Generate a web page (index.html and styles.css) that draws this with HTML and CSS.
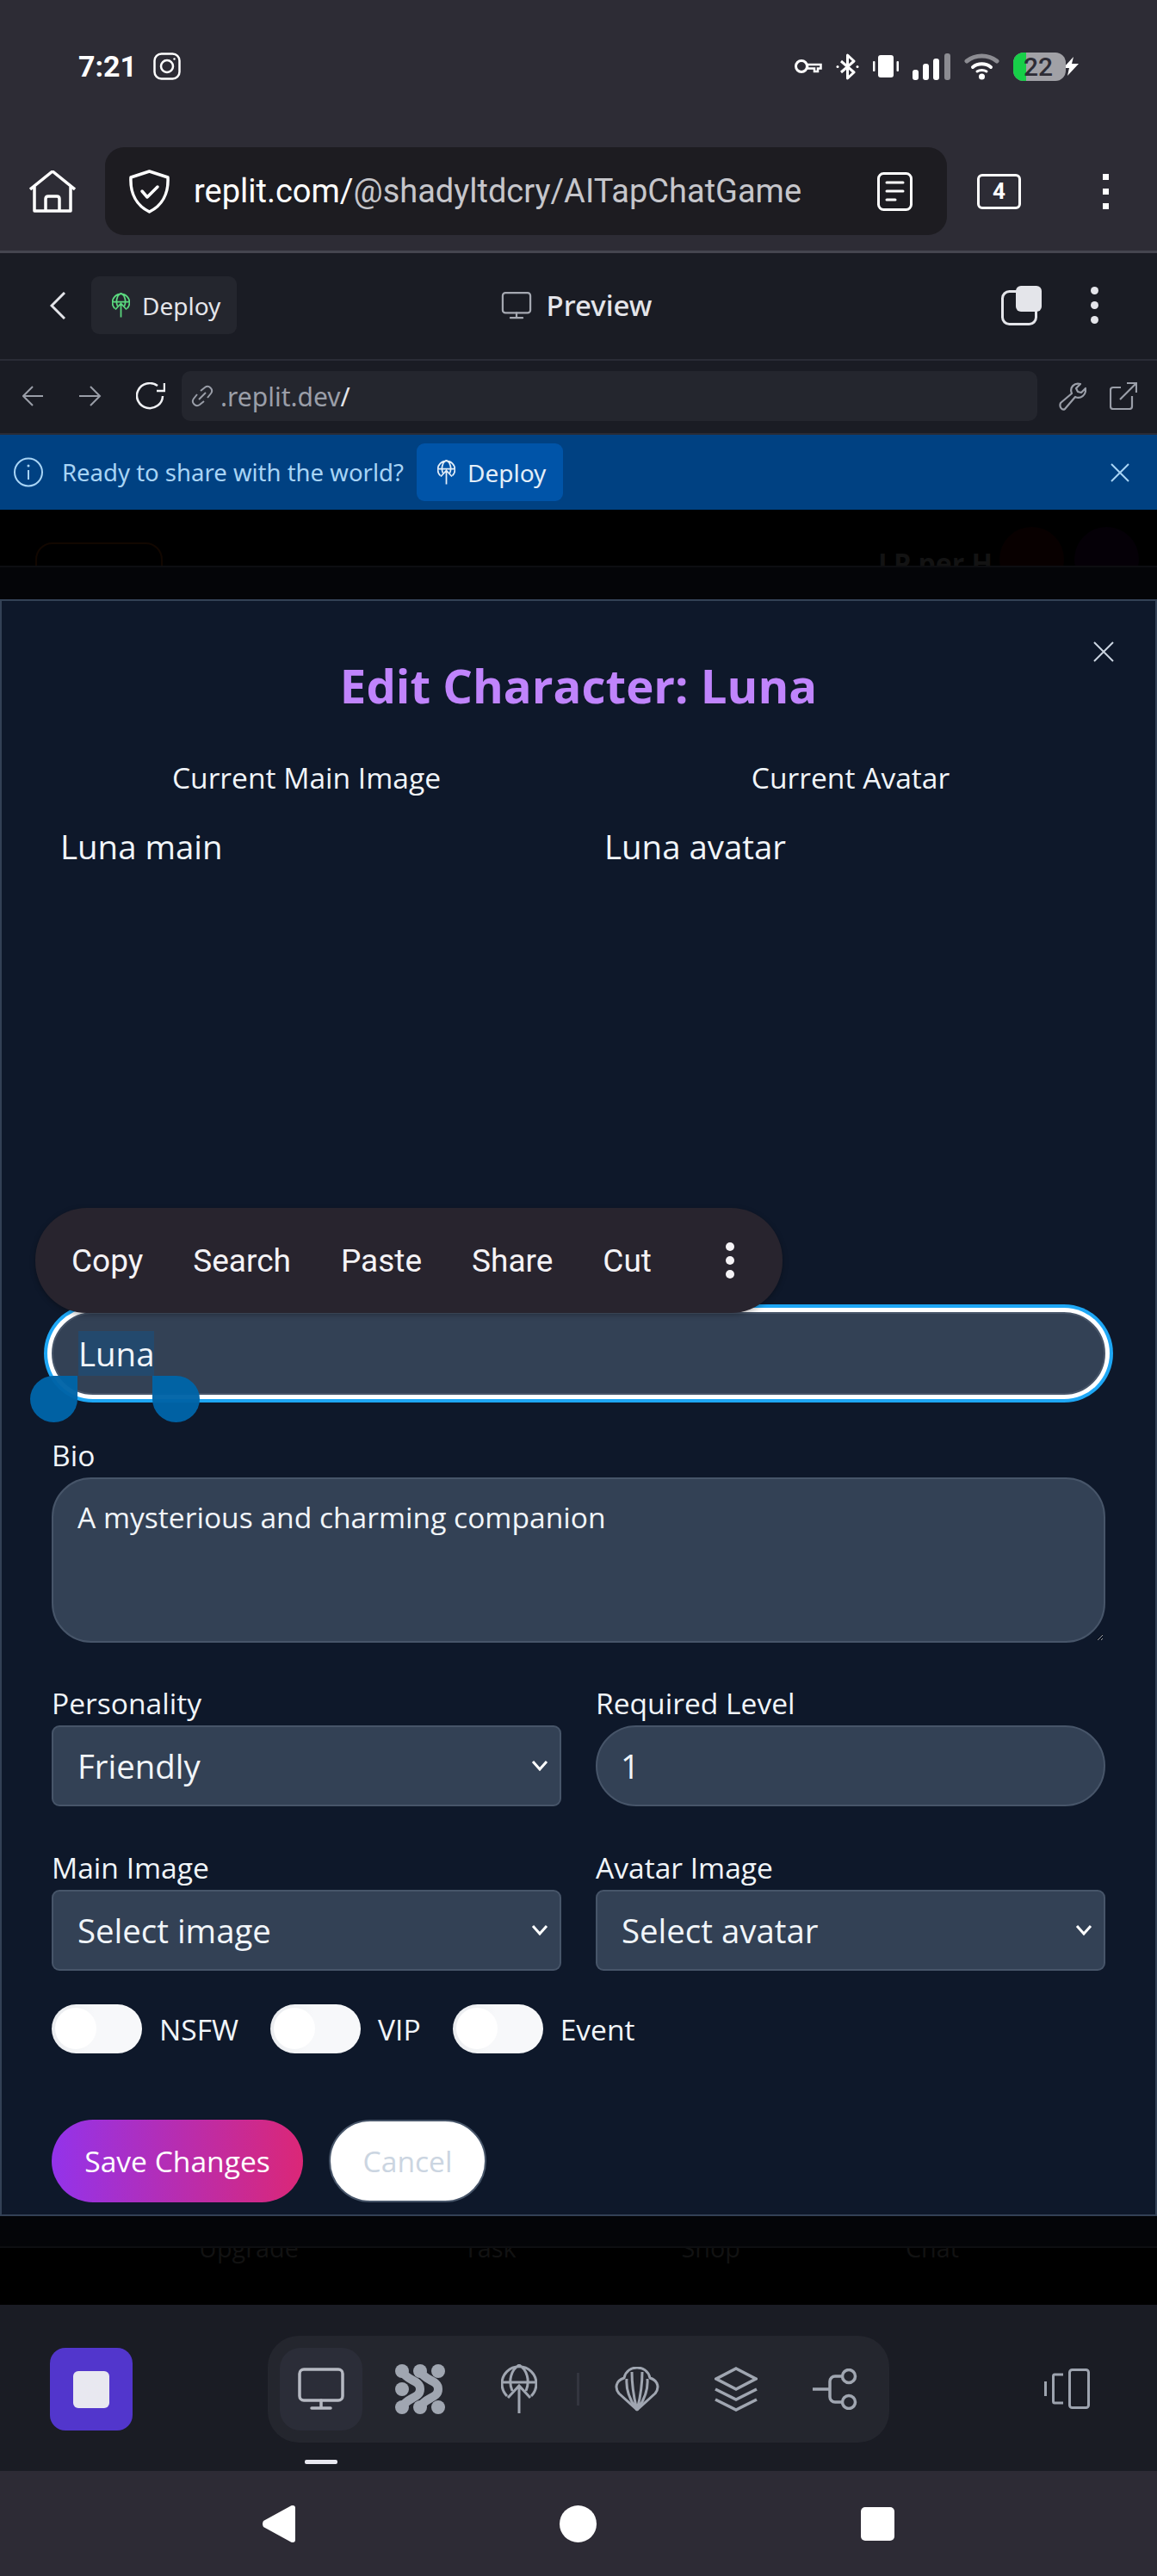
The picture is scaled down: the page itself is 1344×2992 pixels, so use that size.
FILE: index.html

```html
<!DOCTYPE html>
<html>
	<head>
		<meta charset="utf-8">
		<title>Edit Character: Luna</title>
		<link rel="stylesheet" href="styles.css">
	</head>

	<body>
		<svg class="defs" width="0" height="0">
			<symbol id="i-deploy" viewBox="0 0 42 58">
				<path d="M7 37A20 20 0 1 1 35 37M13 31C8 19 12 6 21 1C30 6 34 19 29 31M1 21H41M21 57V26M8 39L21 25L34 39" fill="none" stroke="currentColor"/>
			</symbol>
			<symbol id="i-monitor" viewBox="0 0 56 56">
				<rect x="3" y="5" width="50" height="36" rx="5" fill="none" stroke="currentColor"/>
				<path d="M28 41V50M17 50H39" fill="none" stroke="currentColor" stroke-linecap="round"/>
			</symbol>
		</svg>

		<header class="chrome">
			<div class="status-row">
				<span class="time">7:21</span>
				<svg class="ig" width="32" height="32" viewBox="0 0 32 32" fill="none" stroke="#fff" stroke-width="2.5"><rect x="1.5" y="1.5" width="29" height="29" rx="8"/><circle cx="16" cy="16" r="7"/><circle cx="24.5" cy="7.5" r="1.2" fill="#fff" stroke="none"/></svg>
				<div class="status-icons">
					<svg width="33" height="20" viewBox="0 0 33 20" fill="none" stroke="#fff" stroke-width="3"><circle cx="9" cy="10" r="6.5"/><path d="M16 8H31.500V12.500H28V16H24V12.500H16Z" stroke-width="2.500"/></svg>
					<svg width="27" height="31" viewBox="0 0 27 31" fill="none" stroke="#fff" stroke-width="3" stroke-linejoin="round"><path d="M6 9L21 22L13.500 29V2L21 9L6 22"/><circle cx="2" cy="15.500" r="1.500" fill="#fff" stroke="none"/><circle cx="25" cy="15.500" r="1.500" fill="#fff" stroke="none"/></svg>
					<svg width="30" height="26" viewBox="0 0 30 26" fill="#fff"><rect x="6" width="18" height="26" rx="3"/><rect y="7" width="2.500" height="12" rx="1"/><rect x="27.500" y="7" width="2.500" height="12" rx="1"/></svg>
					<svg width="44" height="31" viewBox="0 0 44 31" fill="#fff"><rect y="19" width="7" height="12" rx="3"/><rect x="12" y="12" width="7" height="19" rx="3"/><rect x="24" y="6" width="7" height="25" rx="3"/><rect x="37" width="7" height="31" rx="3" fill="#8c8c92"/></svg>
					<svg width="41" height="31" viewBox="0 0 41 31" fill="none" stroke-linecap="round"><path d="M3 9C13 1 28 1 38 9" stroke="#8c8c92" stroke-width="5"/><path d="M10 16C16 11 25 11 31 16" stroke="#fff" stroke-width="4"/><path d="M15 21C18 19 23 19 26 21" stroke="#fff" stroke-width="3"/><circle cx="20.500" cy="27" r="3.500" fill="#fff"/></svg>
					<div class="battery"><span class="battery-fill"></span><span class="battery-num">22</span></div>
					<svg class="bolt" width="20" height="24" viewBox="0 0 20 24" fill="#fff" stroke="#2d2c35" stroke-width="2" paint-order="stroke"><path d="M13 1L1 14H8L6 23L19 9H11Z"/></svg>
				</div>
			</div>
			<div class="url-row">
				<svg class="home" width="54" height="49" viewBox="0 0 54 49" fill="none" stroke="#fff" stroke-width="3.500" stroke-linejoin="round"><path d="M1 22L27 1L53 22M6 19V47H48V19"/><path d="M19 47V33Q19 30 22 30H32Q35 30 35 33V47"/></svg>
				<div class="url-bar">
					<svg width="47" height="51" viewBox="0 0 47 51" fill="none" stroke="#fff" stroke-width="3.500" stroke-linejoin="round" stroke-linecap="round"><path d="M23.500 2L45 9C46 28 38 42 23.500 49C9 42 1 28 2 9Z"/><path d="M15 25L21 32L33 20"/></svg>
					<span class="url-text">replit.com/<span class="url-dim">@shadyltdcry/AITapChatGame</span></span>
					<svg class="reader" width="41" height="45" viewBox="0 0 41 45" fill="none" stroke="#fff" stroke-width="3" stroke-linecap="round"><rect x="1.500" y="1.500" width="38" height="42" rx="6"/><path d="M11 12H30M11 22H30M11 32H21"/></svg>
				</div>
				<div class="tab-count">4</div>
				<div class="dots-square"><i></i><i></i><i></i></div>
			</div>
		</header>

		<div class="repl-head">
			<div class="repl-left">
				<svg width="18" height="32" viewBox="0 0 18 32" fill="none" stroke="#e4e5ea" stroke-width="3"><path d="M17 1L2 16L17 31"/></svg>
				<div class="deploy-chip"><svg class="deploy-green" width="21" height="29"><use href="#i-deploy"/></svg>Deploy</div>
			</div>
			<div class="repl-title"><svg class="preview-icon" width="36" height="36"><use href="#i-monitor"/></svg>Preview</div>
			<div class="repl-right">
				<div class="split-icon"><svg width="47" height="46" viewBox="0 0 47 46"><rect x="1.500" y="6.500" width="39" height="38" rx="8" fill="none" stroke="#e4e5ea" stroke-width="3"/><rect x="17" y="0" width="30" height="30" rx="6" fill="#e4e5ea"/></svg></div>
				<div class="dots-round"><i></i><i></i><i></i></div>
			</div>
		</div>

		<div class="repl-nav">
			<svg width="24" height="24" viewBox="0 0 24 24" fill="none" stroke="#9a9ea8" stroke-width="2"><path d="M24 12H2M12 1L1 12L12 23"/></svg>
			<svg width="26" height="24" viewBox="0 0 26 24" fill="none" stroke="#9a9ea8" stroke-width="2"><path d="M0 12H24M13 1L24 12L13 23"/></svg>
			<svg width="34" height="32" viewBox="0 0 34 32" fill="none" stroke="#f0f1f4" stroke-width="2.500"><path d="M31 16A15 14.500 0 1 1 25 4M33 1V10H24"/></svg>
			<div class="repl-url">
				<svg width="26" height="26" viewBox="0 0 26 26" fill="none" stroke="#9a9ea8" stroke-width="2"><path d="M11 7L16 3A5 5 0 0 1 23 10L19 15M15 19L10 23A5 5 0 0 1 3 16L7 11M9 17L17 9"/></svg>
				<span>.replit.dev<b>/</b></span>
			</div>
			<svg width="34" height="33" viewBox="0 0 34 33" fill="none" stroke="#9a9ea8" stroke-width="2.200"><path d="M4 24L17 13C14 6 20 0 27 2L22 7L24 11L28 12L33 7C34 15 27 20 21 17L9 31C6 33 2 29 4 24Z" stroke-linejoin="round"/></svg>
			<svg width="32" height="32" viewBox="0 0 32 32" fill="none" stroke="#9a9ea8" stroke-width="2.200"><path d="M13 6H4Q1 6 1 9V28Q1 31 4 31H23Q26 31 26 28V16M12 20L31 1M20 1H31V12"/></svg>
		</div>

		<div class="banner">
			<svg width="34" height="35" viewBox="0 0 34 35" fill="none" stroke="#a8d4f5" stroke-width="2"><circle cx="17" cy="17.500" r="16"/><path d="M17 15V26" /><circle cx="17" cy="10" r="1.500" fill="#a8d4f5" stroke="none"/></svg>
			<span class="banner-text">Ready to share with the world?</span>
			<div class="banner-btn"><svg width="21" height="29"><use href="#i-deploy"/></svg>Deploy</div>
			<svg class="banner-x" width="22" height="22" viewBox="0 0 22 22" fill="none" stroke="#a8d4f5" stroke-width="2"><path d="M1 1L21 21M21 1L1 21"/></svg>
		</div>

		<div class="behind-top">
			<span class="ghost-box"></span>
			<span class="ghost-lp">LP per H</span>
			<span class="ghost-dot red"></span>
			<span class="ghost-dot violet"></span>
		</div>
		<div class="scrim-top"></div>

		<main class="modal">
			<svg class="modal-x" width="24" height="24" viewBox="0 0 24 24" fill="none" stroke="#cbd5e1" stroke-width="2"><path d="M1 1L23 23M23 1L1 23"/></svg>
			<h1>Edit Character: Luna</h1>

			<div class="previews">
				<div>
					<div class="preview-label">Current Main Image</div>
					<div class="preview-img">Luna main</div>
				</div>
				<div>
					<div class="preview-label">Current Avatar</div>
					<div class="preview-img">Luna avatar</div>
				</div>
			</div>

			<div class="name-wrap">
				<div class="menu">
					<span>Copy</span><span>Search</span><span>Paste</span><span>Share</span><span>Cut</span>
					<div class="menu-dots"><i></i><i></i><i></i></div>
				</div>
				<div class="name-field"><span class="selected">Luna</span></div>
				<i class="handle left"></i>
				<i class="handle right"></i>
			</div>

			<label class="lbl">Bio</label>
			<textarea class="bio">A mysterious and charming companion</textarea>

			<div class="two-col">
				<div>
					<label class="lbl">Personality</label>
					<select class="pick"><option>Friendly</option></select>
				</div>
				<div>
					<label class="lbl">Required Level</label>
					<input class="level" value="1">
				</div>
				<div>
					<label class="lbl">Main Image</label>
					<select class="pick"><option>Select image</option></select>
				</div>
				<div>
					<label class="lbl">Avatar Image</label>
					<select class="pick"><option>Select avatar</option></select>
				</div>
			</div>

			<div class="toggles">
				<div class="toggle"><span class="knob"></span></div><span>NSFW</span>
				<div class="toggle"><span class="knob"></span></div><span>VIP</span>
				<div class="toggle"><span class="knob"></span></div><span>Event</span>
			</div>

			<div class="actions">
				<button class="save" type="button">Save Changes</button>
				<button class="cancel" type="button">Cancel</button>
			</div>
		</main>

		<div class="scrim-bottom"></div>
		<div class="behind-bottom">
			<span>Upgrade</span><span>Task</span><span>Shop</span><span>Chat</span>
		</div>

		<div class="dock">
			<div class="stop"><span></span></div>
			<div class="tools-col">
				<div class="tools">
					<div class="tool active"><svg width="56" height="56"><use href="#i-monitor"/></svg></div>
					<div class="tool">
						<svg width="58" height="58" viewBox="0 0 58 58" fill="none" stroke="#a0a6b1" stroke-width="10" stroke-linecap="round"><path d="M8 8C14 20 29 18 29 29C29 40 14 38 8 50M29 8C35 20 50 18 50 29C50 40 35 38 29 50"/><circle cx="50" cy="8" r="8" fill="#a0a6b1" stroke="none"/><circle cx="50" cy="50" r="8" fill="#a0a6b1" stroke="none"/><circle cx="8" cy="29" r="8" fill="#a0a6b1" stroke="none"/><circle cx="8" cy="8" r="8" fill="#a0a6b1" stroke="none"/><circle cx="29" cy="8" r="8" fill="#a0a6b1" stroke="none"/><circle cx="8" cy="50" r="8" fill="#a0a6b1" stroke="none"/><circle cx="29" cy="50" r="8" fill="#a0a6b1" stroke="none"/></svg>
					</div>
					<div class="tool"><svg width="42" height="58"><use href="#i-deploy"/></svg></div>
					<span class="tool-sep"></span>
					<div class="tool">
						<svg width="52" height="52" viewBox="0 0 52 52" fill="none" stroke="currentColor" stroke-width="3" stroke-linejoin="round"><path d="M26 50L5 31C0 25 1 16 11 13C13 4 20 1 26 1C32 1 39 4 41 13C51 16 52 25 47 31Z"/><path d="M26 50C17 38 13 26 14 14M26 50C35 38 39 26 38 14M26 50C22 35 20 20 20 6M26 50C30 35 32 20 32 6"/></svg>
					</div>
					<div class="tool">
						<svg width="50" height="52" viewBox="0 0 50 52" fill="none" stroke="currentColor" stroke-width="3.500"><path d="M25 2L48 14L25 26L2 14Z"/><path d="M1 26L25 38L49 26M1 38L25 50L49 38"/></svg>
					</div>
					<div class="tool">
						<svg width="52" height="48" viewBox="0 0 52 48" fill="none" stroke="currentColor" stroke-width="3.500"><path d="M0 24H20M34 9H26A6 6 0 0 0 20 15V33A6 6 0 0 0 26 39H34"/><circle cx="42" cy="9" r="7.500"/><circle cx="42" cy="39" r="7.500"/></svg>
					</div>
				</div>
				<span class="tool-mark"></span>
			</div>
			<svg class="panel-icon" width="53" height="47" viewBox="0 0 53 47" fill="none" stroke="#9da3ae" stroke-width="3"><rect x="29.500" y="1.500" width="22" height="44" rx="3"/><path d="M22 7H12Q10.500 7 10.500 9V38Q10.500 40 12 40H22M1.500 15V32"/></svg>
		</div>

		<footer class="nav">
			<svg width="39" height="43" viewBox="0 0 39 43" fill="#fff"><path d="M36 0Q39 0 39 3V40Q39 43 36 43Q34 43 33 42L2 25Q0 21.500 2 18L33 1Q34 0 36 0Z"/></svg>
			<span class="nav-home"></span>
			<span class="nav-square"></span>
		</footer>
	</body>
</html>
```

FILE: styles.css

```css
* {
	box-sizing: border-box;
}

html, body {
	margin: 0;
	background-color: #000;
}

body {
	width: 1344px;
	height: 2992px;
	overflow: hidden;
	font-family: "Open Sans", sans-serif;
	color: #f1f5f9;
}

svg {
	flex: none;
	display: block;
}

.defs {
	position: absolute;
}

/* phone and browser chrome */
.chrome {
	height: 294px;
	padding-top: 60px;
	background-color: #2d2c35;
	border-bottom: 3px solid #45454f;
	font-family: Roboto, sans-serif;
	color: #fff;
}

.status-row {
	display: flex;
	align-items: center;
	height: 34px;
	padding: 0 90px 0 91px;
}

.time {
	font-size: 34px;
	font-weight: 700;
	width: 63px;
}

.ig {
	margin-left: 24px;
}

.status-icons {
	display: flex;
	align-items: center;
	margin-left: auto;
	gap: 16px;
}

.battery {
	display: flex;
	position: relative;
	width: 61px;
	height: 33px;
	border-radius: 12px;
	background-color: #a1a1a6;
	overflow: hidden;
}

.battery-fill {
	width: 15px;
	background-color: #17cf48;
}

.battery-num {
	position: absolute;
	left: 12px;
	top: 0;
	font-size: 30px;
	font-weight: 500;
	line-height: 33px;
	color: #2d2c35;
}

.bolt {
	margin-left: -20px;
}

.url-row {
	display: flex;
	align-items: center;
	height: 102px;
	margin-top: 77px;
	padding-left: 34px;
}

.home {
	width: 54px;
}

.url-bar {
	display: flex;
	align-items: center;
	width: 978px;
	height: 102px;
	margin-left: 34px;
	padding: 0 40px 0 28px;
	border-radius: 22px;
	background-color: #1d1c21;
}

.url-text {
	margin-left: 28px;
	font-size: 38px;
	white-space: nowrap;
}

.url-dim {
	color: #c6c6cb;
}

.reader {
	margin-left: auto;
}

.tab-count {
	width: 51px;
	height: 41px;
	margin-left: 35px;
	border: 3.5px solid #fff;
	border-radius: 6px;
	text-align: center;
	font-size: 26px;
	font-weight: 700;
	line-height: 34px;
}

.dots-square {
	display: flex;
	flex-direction: column;
	gap: 10px;
	margin-left: 95px;
}

.dots-square i {
	width: 7px;
	height: 7px;
	background-color: #fff;
}

/* replit header */
.repl-head {
	display: grid;
	grid-template-columns: 1fr auto 1fr;
	align-items: center;
	height: 125px;
	padding: 0 68px 2px 58px;
	background-color: #1a1c24;
	border-bottom: 2px solid #2a2c36;
	font-family: "Noto Sans", sans-serif;
	color: #e4e5ea;
}

.repl-left {
	display: flex;
	align-items: center;
	gap: 30px;
}

.deploy-chip, .banner-btn {
	display: flex;
	align-items: center;
	gap: 14px;
	width: 169px;
	height: 67px;
	padding-left: 24px;
	border-radius: 9px;
	background-color: #24262e;
	font-size: 28px;
	stroke-width: 3.5;
}

.deploy-green {
	color: #5bd97f;
}

.repl-title {
	display: flex;
	align-items: center;
	gap: 17px;
	margin-left: 5px;
	font-size: 33px;
	font-weight: 500;
	stroke-width: 3.5;
}

.preview-icon {
	color: #a5a8b1;
}

.repl-right {
	display: flex;
	align-items: center;
	justify-content: flex-end;
	gap: 57px;
}

.dots-round {
	display: flex;
	flex-direction: column;
	gap: 8px;
}

.dots-round i, .menu-dots i {
	display: block;
	width: 9px;
	height: 9px;
	border-radius: 50%;
	background-color: #e4e5ea;
}

.repl-nav {
	display: flex;
	align-items: center;
	height: 86px;
	padding: 0 23px 2px 26px;
	background-color: #1a1c24;
	border-bottom: 2px solid #2a2c36;
}

.repl-nav > svg:nth-child(2) {
	margin-left: 42px;
}

.repl-nav > svg:nth-child(3) {
	margin-left: 40px;
}

.repl-nav > svg:nth-child(5) {
	margin-left: 23px;
}

.repl-nav > svg:nth-child(6) {
	margin-left: 27px;
}

.repl-url {
	display: flex;
	align-items: center;
	gap: 8px;
	width: 994px;
	height: 58px;
	margin-left: 19px;
	padding-left: 11px;
	border-radius: 10px;
	background-color: #24262e;
	font-family: "Noto Sans", sans-serif;
	font-size: 30px;
	color: #9a9ea8;
}

.repl-url b {
	font-weight: 400;
	color: #e4e5ea;
}

.banner {
	display: flex;
	align-items: center;
	height: 87px;
	padding: 0 32px 0 16px;
	background-color: #004182;
	font-family: "Noto Sans", sans-serif;
	color: #a8d4f5;
}

.banner-text {
	width: 398px;
	margin-left: 22px;
	font-size: 27.5px;
	white-space: nowrap;
}

.banner-btn {
	width: 170px;
	margin-left: 14px;
	background-color: #0054a8;
	color: #e3eef8;
}

.banner-x {
	margin-left: auto;
}

/* faded page behind the modal */
.behind-top {
	display: flex;
	align-items: flex-start;
	height: 65px;
	padding-left: 41px;
	overflow: hidden;
}

.ghost-box {
	width: 148px;
	height: 80px;
	margin-top: 38px;
	border: 2px solid #120700;
	border-radius: 20px;
}

.ghost-lp {
	margin: 40px 8px 0 831px;
	font-size: 32px;
	font-weight: 700;
	white-space: nowrap;
	color: #131313;
}

.ghost-dot {
	flex: none;
	width: 75px;
	height: 75px;
	margin-top: 20px;
	border-radius: 50%;
}

.ghost-dot.red {
	background-color: #080000;
}

.ghost-dot.violet {
	margin-left: 12px;
	background-color: #050007;
}

.scrim-top {
	height: 39px;
	background-color: #040508;
	border-top: 2px solid #0d0e11;
}

.scrim-bottom {
	height: 37px;
	background-color: #040508;
	border-bottom: 2px solid #0d0e11;
}

.behind-bottom {
	display: flex;
	gap: 192px;
	height: 66px;
	padding-left: 231px;
	overflow: hidden;
	font-size: 28.8px;
	line-height: 40px;
	color: #121212;
}

.behind-bottom span {
	margin-top: -20px;
}

/* modal */
.modal {
	position: relative;
	height: 1878px;
	padding: 60px 58px 0;
	background-color: #0e182a;
	border: 2px solid #334155;
}

.modal-x {
	position: absolute;
	top: 47px;
	right: 48px;
}

h1 {
	margin: 0;
	text-align: center;
	font-size: 54.5px;
	font-weight: 700;
	line-height: 76px;
	color: #c084fc;
}

.previews {
	display: grid;
	grid-template-columns: 592px 592px;
	gap: 40px;
	margin-top: 47px;
}

.preview-label {
	text-align: center;
	font-size: 33.6px;
	line-height: 44px;
}

.preview-img {
	height: 599px;
	padding: 33px 10px 0 10px;
	font-size: 38.4px;
	line-height: 50px;
}

.name-wrap {
	position: relative;
}

.menu {
	position: absolute;
	z-index: 2;
	left: -19px;
	top: -121px;
	display: flex;
	align-items: center;
	width: 868px;
	height: 122px;
	padding-left: 42px;
	border-radius: 60px;
	background-color: #28242e;
	box-shadow: 0 2px 6px rgba(0, 0, 0, .3);
	font-family: Roboto, sans-serif;
	font-size: 37px;
	color: #f5f3f6;
}

.menu span {
	margin-right: 58px;
}

.menu-dots {
	display: flex;
	flex-direction: column;
	gap: 6px;
	margin-left: 28px;
}

.menu-dots i {
	width: 10px;
	height: 10px;
	background-color: #f5f3f6;
}

.name-field {
	display: flex;
	align-items: center;
	height: 96px;
	padding-left: 29px;
	background-color: #334155;
	border: 2px solid #475569;
	border-radius: 48px;
	box-shadow: 0 0 0 5px #fff, 0 0 0 9px #1ea7f5;
	font-size: 38.4px;
}

.selected {
	line-height: 52px;
	background-color: #23496d;
}

.handle {
	position: absolute;
	top: 74px;
	width: 55px;
	height: 54px;
	background-color: rgba(0, 100, 167, .97);
}

.handle.left {
	left: -25px;
	border-radius: 50% 0 50% 50%;
}

.handle.right {
	left: 117px;
	border-radius: 0 50% 50% 50%;
}

.lbl {
	display: block;
	margin-bottom: 4px;
	font-size: 33.6px;
	line-height: 44px;
}

.name-wrap + .lbl {
	margin-top: 48px;
}

.bio, .pick, .level {
	display: block;
	width: 100%;
	color: #f1f5f9;
	background-color: #334155;
	border: 2px solid #475569;
	font-family: "Open Sans", sans-serif;
	outline: none;
}

.bio {
	height: 192px;
	padding: 22px 28px;
	border-radius: 46px;
	font-size: 33.6px;
	line-height: 44px;
}

.two-col {
	display: grid;
	grid-template-columns: 592px 592px;
	gap: 49px 40px;
	margin-top: 48px;
}

.pick {
	height: 94px;
	padding-left: 28px;
	border-radius: 9px;
	font-size: 38.4px;
	appearance: none;
	background-image: url("data:image/svg+xml,%3Csvg xmlns='http://www.w3.org/2000/svg' width='20' height='14' viewBox='0 0 20 14' fill='none' stroke='%23fff' stroke-width='3'%3E%3Cpath d='M2 2L10 11L18 2'/%3E%3C/svg%3E");
	background-repeat: no-repeat;
	background-position: right 13px center;
}

.level {
	height: 94px;
	padding-left: 27px;
	border-radius: 47px;
	font-size: 38.4px;
}

.toggles {
	display: flex;
	align-items: center;
	margin-top: 39px;
	font-size: 33.6px;
}

.toggle {
	width: 105px;
	height: 57px;
	padding: 4px;
	border-radius: 29px;
	background: linear-gradient(100deg, #e9ebee, #f7f8fa 45%);
}

.toggle + span {
	margin: 0 37px 0 20px;
}

.knob {
	display: block;
	width: 48px;
	height: 48px;
	border-radius: 50%;
	background-color: #fff;
}

.actions {
	display: flex;
	gap: 30px;
	margin-top: 77px;
}

.actions button {
	height: 96px;
	border-radius: 48px;
	font-family: "Open Sans", sans-serif;
	font-size: 33.6px;
}

.save {
	width: 292px;
	border: 0;
	background: linear-gradient(90deg, #9333ea, #db2777);
	color: #fff;
}

.cancel {
	width: 183px;
	border: 2px solid #475569;
	background-color: #fff;
	color: #cbd5e1;
}

/* bottom dock */
.dock {
	display: flex;
	align-items: flex-start;
	height: 193px;
	padding: 36px 0 0 58px;
	background-color: #1a1c24;
	color: #a0a6b1;
	stroke-width: 3;
}

.stop {
	display: flex;
	align-items: center;
	justify-content: center;
	width: 96px;
	height: 96px;
	margin-top: 14px;
	border-radius: 18px;
	background-color: #5236cc;
}

.stop span {
	width: 42px;
	height: 43px;
	border-radius: 6px;
	background-color: #e8e8f0;
}

.tools-col {
	display: flex;
	flex-direction: column;
	margin-left: 157px;
}

.tools {
	display: flex;
	align-items: center;
	gap: 19px;
	width: 722px;
	height: 124px;
	padding-left: 14px;
	border-radius: 36px;
	background-color: #24262e;
}

.tool {
	display: flex;
	align-items: center;
	justify-content: center;
	width: 96px;
	height: 96px;
	border-radius: 24px;
}

.tool.active {
	background-color: #2b2d38;
	color: #b6b9c2;
	stroke-width: 3.5;
}

.tool-sep {
	width: 3px;
	height: 38px;
	background-color: #33353f;
}

.tool-mark {
	width: 38px;
	height: 5px;
	margin: 20px 0 0 43px;
	border-radius: 2px;
	background-color: #e8e8f0;
}

.panel-icon {
	margin: 38px 0 0 180px;
}

/* android nav */
.nav {
	display: flex;
	align-items: center;
	height: 122px;
	padding-left: 304px;
	gap: 307px;
	background-color: #2d2b35;
}

.nav-home {
	width: 43px;
	height: 43px;
	border-radius: 50%;
	background-color: #fff;
}

.nav-square {
	width: 39px;
	height: 39px;
	border-radius: 5px;
	background-color: #fff;
}
```
